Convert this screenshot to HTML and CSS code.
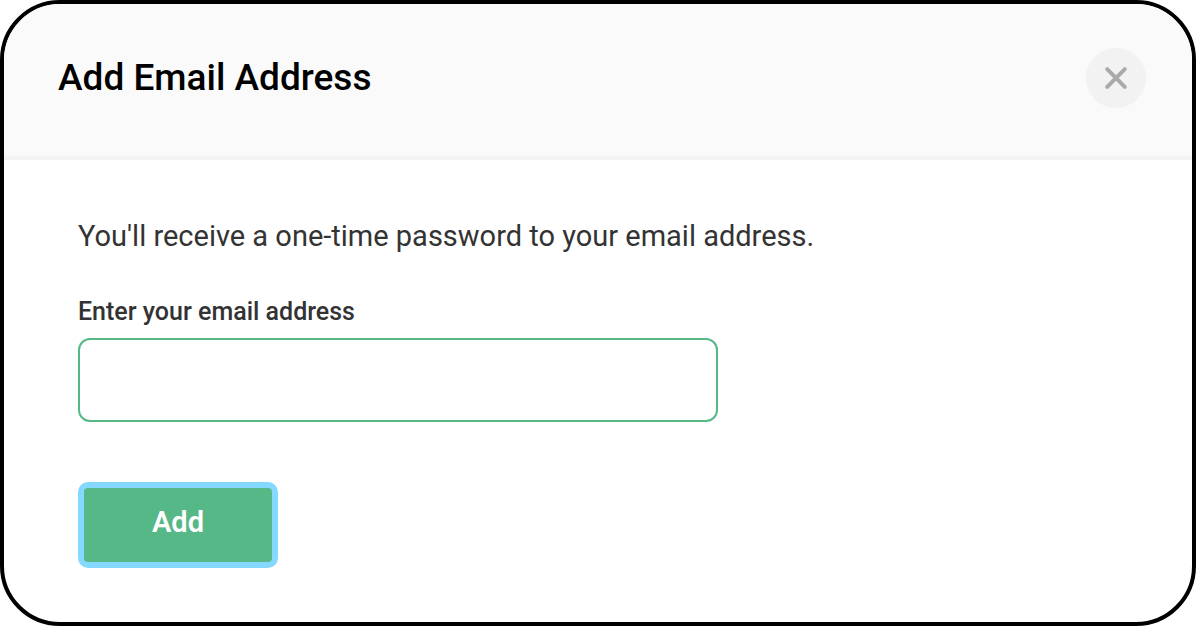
FILE: index.html
```html
<!DOCTYPE html>
<html lang="en">
<head>
<meta charset="utf-8">
<meta name="viewport" content="width=device-width, initial-scale=1">
<title>Add Email Address</title>
<link rel="stylesheet" href="styles.css">
</head>
<body>
<main class="dialog" role="dialog" aria-labelledby="dialog-title">
  <header class="dialog-header">
    <h1 class="dialog-title" id="dialog-title">Add Email Address</h1>
    <button class="close-button" type="button" aria-label="Close">
      <svg class="close-icon" viewBox="0 0 24 24" aria-hidden="true"><path d="M3.2 3.2 20.8 20.8M20.8 3.2 3.2 20.8"/></svg>
    </button>
  </header>
  <form class="dialog-body">
    <p class="description">You'll receive a one-time password to your email address.</p>
    <label class="field-label" for="email">Enter your email address</label>
    <input class="field-input" id="email" type="email">
    <button class="submit-button" type="button">Add</button>
  </form>
</main>
</body>
</html>
```

FILE: styles.css
```css
* {
  box-sizing: border-box;
}

body {
  margin: 0;
  background: #fff;
  font-family: Roboto, "Noto Sans", sans-serif;
  color: #333;
}

.dialog {
  min-height: 100vh;
  border: 4px solid #000;
  border-radius: 60px;
  overflow: hidden;
  background: #fff;
}

.dialog-header {
  display: flex;
  justify-content: space-between;
  align-items: flex-start;
  padding: 44px 46px 48px 54px;
  border-bottom: 4px solid #f4f4f4;
  background: #fafafa;
}

.dialog-title {
  margin: 0;
  font-size: 37px;
  font-weight: 500;
  line-height: 60px;
  color: #000;
}

.close-button {
  display: grid;
  place-items: center;
  width: 60px;
  height: 60px;
  padding: 0;
  border: 0;
  border-radius: 50%;
  background: #f2f2f2;
}

.close-icon {
  width: 24px;
  height: 24px;
  fill: none;
  stroke: #aaa;
  stroke-width: 4;
  stroke-linecap: round;
}

.dialog-body {
  display: flex;
  flex-direction: column;
  align-items: flex-start;
  padding: 56px 74px 48px;
}

.description {
  margin: 0 0 36px;
  font-size: 29px;
  line-height: 40px;
}

.field-label {
  margin-bottom: 6px;
  font-size: 25px;
  font-weight: 500;
  line-height: 40px;
}

.field-input {
  width: 640px;
  max-width: 100%;
  height: 84px;
  margin-bottom: 60px;
  padding: 0 24px;
  border: 2px solid #56b787;
  border-radius: 12px;
  background: #fff;
  font: inherit;
  font-size: 29px;
  outline: none;
}

.submit-button {
  width: 200px;
  height: 86px;
  padding: 0 0 6px;
  border: 6px solid #85d8ff;
  border-radius: 10px;
  background: #56b787;
  font: inherit;
  font-size: 29px;
  font-weight: 600;
  color: #fff;
}
```
